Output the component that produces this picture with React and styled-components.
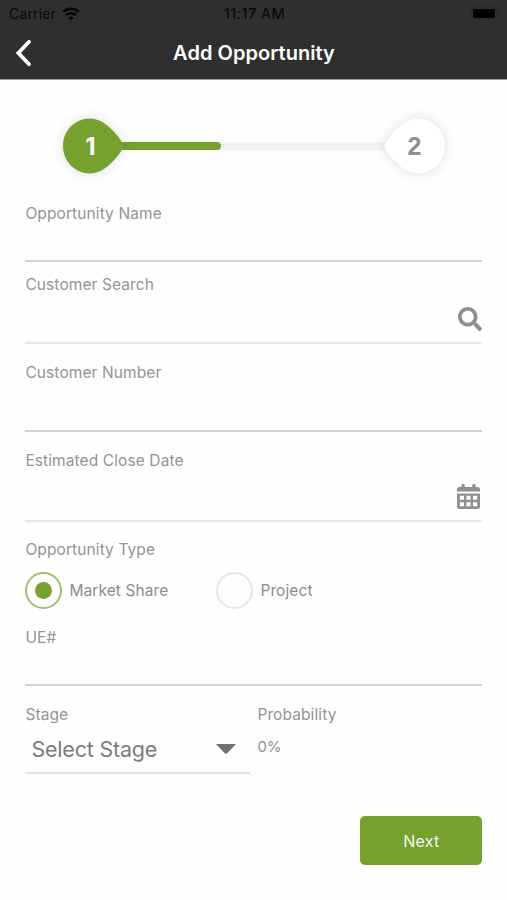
import React, { useState } from 'react';
import styled, { createGlobalStyle } from 'styled-components';
import { FaSearch } from 'react-icons/fa';

const DROP_PATH =
  'M27 .5C34 .5 41 4 47 10C53 15.5 57.5 21 60 26Q61 28 60 30C57.5 35 53 40.5 47 46C41 52 34 55.5 27 55.5C12 55.5 0 43.2 0 28C0 12.8 12 .5 27 .5Z';

const App = () => {
  const [type, setType] = useState('market');

  return (
    <Screen>
      <GlobalStyle />
      <Header>
        <StatusBar>
          <Carrier>
            Carrier
            <svg width="18" height="14" viewBox="0 0 18 14" fill="none" stroke="#050505">
              <path d="M1.2 4.9a11.2 11.2 0 0 1 15.6 0" strokeWidth="2.6" />
              <path d="M4.1 8.2a7 7 0 0 1 9.8 0" strokeWidth="2.4" />
              <path d="M9 13.4 6.3 10.7a3.9 3.9 0 0 1 5.4 0Z" fill="#050505" stroke="none" />
            </svg>
          </Carrier>
          <Time>11:17 AM</Time>
          <Battery>
            <svg width="29" height="13" viewBox="0 0 29 13">
              <rect x="0.5" y="0.5" width="25" height="12" rx="3.5" fill="none" stroke="#292929" />
              <rect x="2" y="2" width="22" height="9" rx="2" fill="#000" />
              <path d="M27 4.5a2.2 2.2 0 0 1 0 4Z" fill="#252525" />
            </svg>
          </Battery>
        </StatusBar>
        <NavBar>
          <Back aria-label="Back">
            <svg width="18" height="28" viewBox="0 0 18 28" fill="none" stroke="#fff">
              <path d="M14 2.8 3.4 14 14 25.2" strokeWidth="3.8" strokeLinecap="round" />
            </svg>
          </Back>
          <Title>Add Opportunity</Title>
        </NavBar>
      </Header>

      <Stepper>
        <Step>
          <Drop viewBox="0 0 61 56">
            <path d={DROP_PATH} fill="#77a12e" />
          </Drop>
          <StepNumber $active>1</StepNumber>
        </Step>
        <Track>
          <Progress />
        </Track>
        <Step>
          <Drop viewBox="0 0 61 56" $flip>
            <path d={DROP_PATH} fill="#fff" />
          </Drop>
          <StepNumber>2</StepNumber>
        </Step>
      </Stepper>

      <Form>
        <Field $height={58}>
          <Label>Opportunity Name</Label>
        </Field>
        <Field $height={69} $gap={13} $light>
          <Label>Customer Search</Label>
          <FieldIcon $bottom={11}>
            <FaSearch size={24} />
          </FieldIcon>
        </Field>
        <Field $height={69} $gap={19}>
          <Label>Customer Number</Label>
        </Field>
        <Field $height={71} $gap={19} $light>
          <Label>Estimated Close Date</Label>
          <FieldIcon $bottom={11} $right={2}>
            <svg width="23" height="25" viewBox="0 0 23 25" fill="currentColor">
              <rect x="4.5" width="3.2" height="5" rx="1" />
              <rect x="15.3" width="3.2" height="5" rx="1" />
              <path d="M2.5 3h18Q23 3 23 5.5V7.5H0V5.5Q0 3 2.5 3Z" />
              <path
                fillRule="evenodd"
                d="M0 9.5H23V22.5Q23 25 20.5 25H2.5Q0 25 0 22.5ZM2.8 11.8v4h4.2v-4ZM9.4 11.8v4h4.2v-4ZM16 11.8v4h4.2v-4ZM2.8 18.2v4h4.2v-4ZM9.4 18.2v4h4.2v-4ZM16 18.2v4h4.2v-4Z"
              />
            </svg>
          </FieldIcon>
        </Field>

        <TypeGroup>
          <Label>Opportunity Type</Label>
          <Options>
            <Option onClick={() => setType('market')}>
              <Radio $checked={type === 'market'} />
              Market Share
            </Option>
            <Option onClick={() => setType('project')}>
              <Radio $checked={type === 'project'} />
              Project
            </Option>
          </Options>
        </TypeGroup>

        <Field $height={58} $gap={19}>
          <Label>UE#</Label>
        </Field>

        <StageRow>
          <Stage>
            <Label>Stage</Label>
            <Select>
              Select Stage
              <svg width="20" height="10" viewBox="0 0 20 10">
                <path d="M0 0H20L11.5 9Q10 10.4 8.5 9Z" fill="#707070" />
              </svg>
            </Select>
          </Stage>
          <Probability>
            <Label>Probability</Label>
            <Value>0%</Value>
          </Probability>
        </StageRow>

        <NextButton>Next</NextButton>
      </Form>
    </Screen>
  );
};

export default App;

const GlobalStyle = createGlobalStyle`
  * {
    box-sizing: border-box;
  }
  body {
    margin: 0;
    background: #fff;
    font-family: Inter, "Liberation Sans", sans-serif;
  }
`;

const Screen = styled.div`
  width: 507px;
  height: 900px;
  overflow: hidden;
  background: #fefefe;
`;

const Header = styled.header`
  height: 80px;
  background: #2f2f2f;
  border-bottom: 1px solid #a0a0a0;
`;

const StatusBar = styled.div`
  display: grid;
  grid-template-columns: 1fr auto 1fr;
  align-items: center;
  height: 27px;
  padding: 0 7px 0 9px;
  color: #0a0a0a;
  font-size: 14px;
`;

const Carrier = styled.div`
  display: flex;
  align-items: center;
  gap: 6px;
  letter-spacing: 0.15px;
`;

const Time = styled.div`
  font-weight: 500;
  font-size: 14.5px;
  letter-spacing: 0.4px;
`;

const Battery = styled.div`
  display: flex;
  justify-content: flex-end;
`;

const NavBar = styled.div`
  display: grid;
  grid-template-columns: 60px 1fr 60px;
  align-items: center;
  height: 51px;
`;

const Back = styled.button`
  display: flex;
  padding: 0 0 0 15px;
  border: 0;
  background: none;
  cursor: pointer;
`;

const Title = styled.h1`
  margin: 0;
  padding-left: 1px;
  color: #fff;
  font-size: 20px;
  font-weight: 600;
  letter-spacing: 0.05px;
  text-align: center;
`;

const Stepper = styled.div`
  display: flex;
  align-items: center;
  height: 56px;
  margin: 38px 62px 0 63px;
`;

const Step = styled.div`
  display: grid;
  flex-shrink: 0;
  width: 61px;
  height: 56px;
  > * {
    grid-area: 1 / 1;
  }
`;

const Drop = styled.svg`
  width: 61px;
  height: 56px;
  overflow: visible;
  filter: drop-shadow(0 0 6px rgba(0, 0, 0, 0.13));
  transform: ${({ $flip }) => ($flip ? 'scaleX(-1)' : 'none')};
`;

const StepNumber = styled.span`
  z-index: 1;
  align-self: center;
  padding-right: ${({ $active }) => ($active ? '6px' : 0)};
  color: ${({ $active }) => ($active ? '#fff' : '#8f8f8f')};
  font-family: ${({ $active }) => ($active ? 'Inter' : "'Liberation Sans'")}, sans-serif;
  font-size: ${({ $active }) => ($active ? 24 : 25)}px;
  font-weight: 700;
  text-align: center;
`;

const Track = styled.div`
  flex: 1;
  height: 8px;
  margin: 0 -1px 0 -3px;
  background: #f2f2f2;
`;

const Progress = styled.div`
  width: 100px;
  height: 8px;
  border-radius: 0 4px 4px 0;
  background: #77a12e;
`;

const Form = styled.main`
  display: flex;
  flex-direction: column;
  padding: 30px 24.6px 0 25.4px;
`;

const Field = styled.div`
  display: flex;
  justify-content: space-between;
  height: ${({ $height }) => $height}px;
  margin-top: ${({ $gap }) => $gap || 0}px;
  border-bottom: ${({ $light }) => ($light ? '2px solid #e8e8e8' : '2px solid #d2d2d2')};
`;

const Label = styled.div`
  color: #949494;
  font-size: 15.5px;
  line-height: 20px;
  letter-spacing: 0.1px;
`;

const FieldIcon = styled.span`
  display: flex;
  align-self: flex-end;
  padding: 0 ${({ $right }) => $right || 0}px ${({ $bottom }) => $bottom}px 0;
  color: #8f8f8f;
`;

const TypeGroup = styled.div`
  margin-top: 18px;
`;

const Options = styled.div`
  display: grid;
  grid-template-columns: 191px 1fr;
  margin-top: 12px;
`;

const Option = styled.div`
  display: flex;
  align-items: center;
  gap: 7px;
  color: #8c8c8c;
  font-size: 15.5px;
  letter-spacing: 0.1px;
  cursor: pointer;
`;

const Radio = styled.span`
  display: flex;
  align-items: center;
  justify-content: center;
  width: 37px;
  height: 37px;
  border: 2px solid ${({ $checked }) => ($checked ? '#a3c070' : '#e6e6e6')};
  border-radius: 50%;
  &::after {
    content: '';
    width: 17px;
    height: 17px;
    border-radius: 50%;
    background: ${({ $checked }) => ($checked ? '#77a12e' : 'transparent')};
  }
`;

const StageRow = styled.div`
  display: flex;
  gap: 7px;
  margin-top: 19px;
`;

const Stage = styled.div`
  width: 225px;
`;

const Select = styled.div`
  display: flex;
  align-items: center;
  justify-content: space-between;
  height: 49px;
  padding: 0 14px 0 6px;
  border-bottom: 2px solid #e3e3e3;
  color: #7c7c7c;
  font-size: 21.5px;
  letter-spacing: -0.2px;
`;

const Probability = styled.div`
  flex: 1;
`;

const Value = styled.div`
  margin-top: 12px;
  color: #8f8f8f;
  font-size: 15px;
  line-height: 20px;
  letter-spacing: -0.2px;
`;

const NextButton = styled.button`
  align-self: flex-end;
  width: 122px;
  height: 49px;
  margin-top: 42px;
  border: 0;
  border-radius: 5px;
  background: #77a12e;
  color: #f4f8ec;
  font-family: inherit;
  font-size: 16px;
  letter-spacing: 0.2px;
  cursor: pointer;
`;
